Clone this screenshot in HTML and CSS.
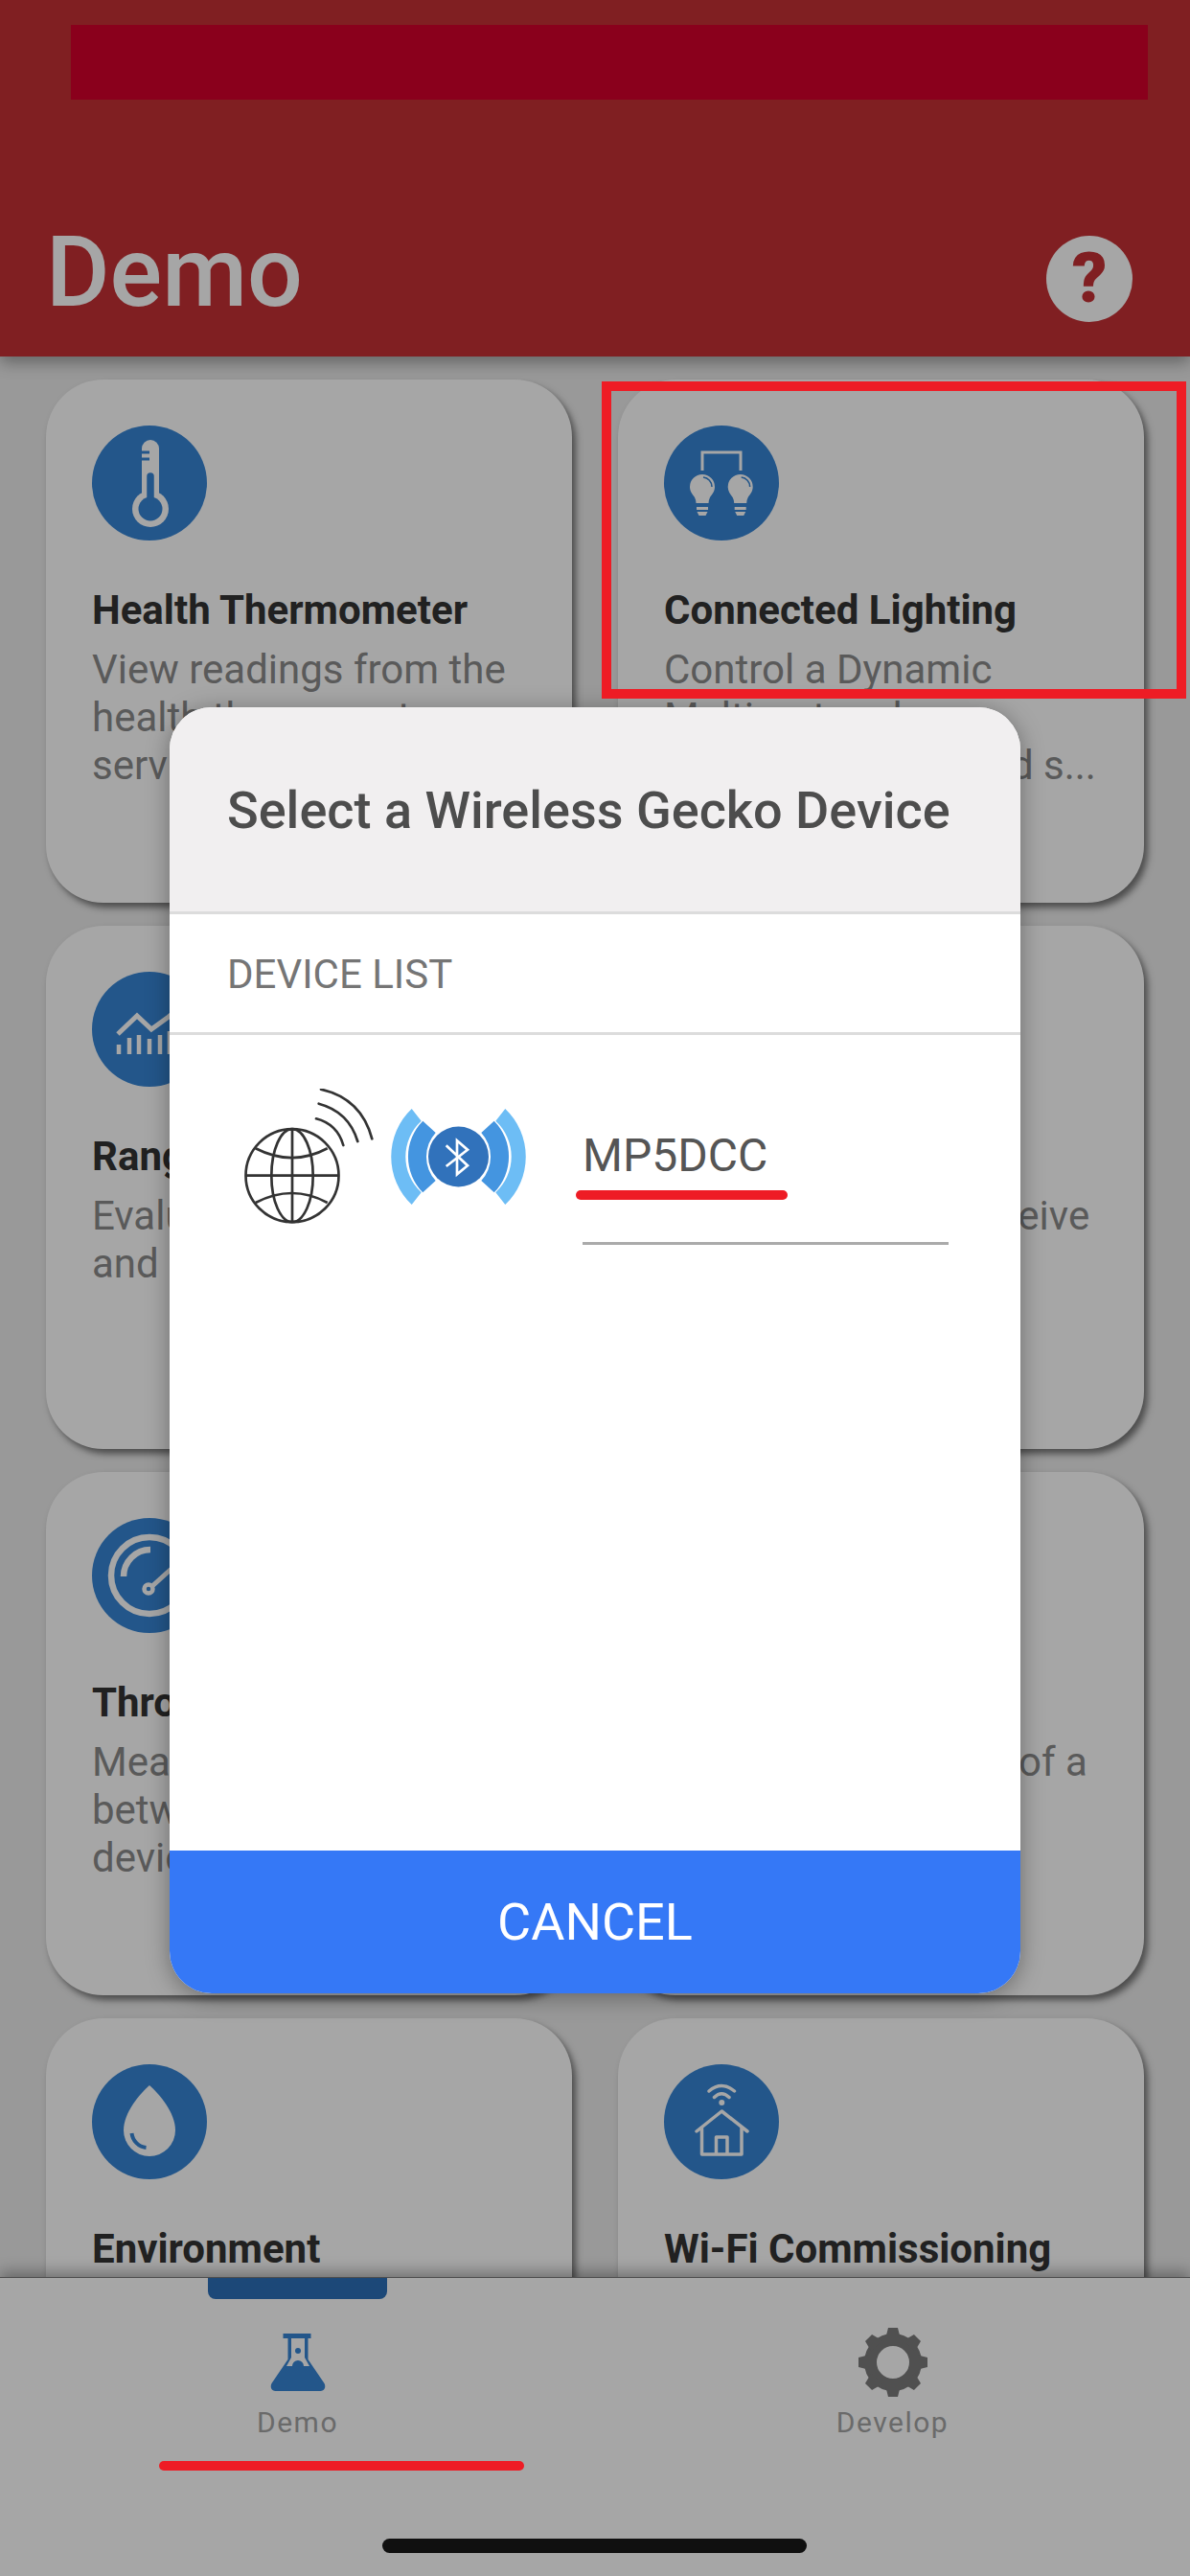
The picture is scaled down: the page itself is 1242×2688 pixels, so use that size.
FILE: index.html
```html
<!DOCTYPE html>
<html lang="en">
<head>
  <meta charset="UTF-8">
  <title>Demo</title>
  <link rel="stylesheet" href="styles.css">
</head>
<body>
  <div class="page">
    <header class="top">
      <h1>Demo</h1>
      <span class="help">?</span>
    </header>

    <main class="grid">
      <div class="card">
        <svg class="ico" viewBox="0 0 120 120">
          <circle class="disc" cx="60" cy="60" r="60"/>
          <rect class="w" x="52" y="15" width="18" height="70" rx="9"/>
          <circle class="w" cx="61" cy="87" r="19"/>
          <circle class="disc" cx="61" cy="87" r="12.5"/>
          <path class="b" stroke-width="7.5" stroke-linecap="round" d="M61 53V82"/>
          <path class="b" stroke-width="3" d="M51 28h9M51 35h9"/>
        </svg>
        <h3>Health Thermometer</h3>
        <p>View readings from the<br>health thermometer<br>service</p>
      </div>
      <div class="card">
        <svg class="ico" viewBox="0 0 120 120">
          <circle class="disc" cx="60" cy="60" r="60"/>
          <path class="wl" stroke-width="3" d="M40 47V28H80V47"/>
          <g id="bulb">
            <path class="w" d="M40 51a13 13 0 0 1 13 13c0 5-3 8-5 11-1 2-1.500 4-1.500 6h-13c0-2-.5-4-1.500-6-2-3-5-6-5-11a13 13 0 0 1 13-13z"/>
            <path class="b" stroke-width="1.600" d="M41 54a10 10 0 0 1 9 10"/>
            <path class="w" d="M34 85h12v3H34zM34.500 90h11l-2 4h-7z"/>
          </g>
          <use href="#bulb" x="39.700"/>
        </svg>
        <h3>Connected Lighting</h3>
        <p>Control a Dynamic<br>Multiprotocol<br>Bluetooth lamps and s...</p>
      </div>
      <div class="card">
        <svg class="ico" viewBox="0 0 120 120">
          <circle class="disc" cx="60" cy="60" r="60"/>
          <path class="wl" stroke-width="5" d="M27 65L47 46L62 60L80 47L96 34"/>
          <path class="wl" stroke-width="4.500" d="M28 86V76M39 86V69M49 86V66M60 86V70M71 86V66M81 86V62M92 86V55"/>
        </svg>
        <h3>Range Test</h3>
        <p>Evaluate link quality<br>and range</p>
      </div>
      <div class="card">
        <svg class="ico" viewBox="0 0 120 120">
          <circle class="disc" cx="60" cy="60" r="60"/>
        </svg>
        <h3>Blinky</h3>
        <p>Control LED and receive<br>button presses</p>
      </div>
      <div class="card">
        <svg class="ico" viewBox="0 0 120 120">
          <circle class="disc" cx="60" cy="60" r="60"/>
          <circle class="wl" stroke-width="6.500" cx="60" cy="60" r="40"/>
          <path class="wl" stroke-width="6.500" d="M33 61a28 28 0 0 1 28-28"/>
          <circle class="wl" stroke-width="4.500" cx="59" cy="74" r="4.500"/>
          <path class="wl" stroke-width="5" stroke-linecap="round" d="M63 71L84 52"/>
        </svg>
        <h3>Throughput</h3>
        <p>Measure throughput<br>between two<br>devices</p>
      </div>
      <div class="card">
        <svg class="ico" viewBox="0 0 120 120">
          <circle class="disc" cx="60" cy="60" r="60"/>
        </svg>
        <h3>Motion</h3>
        <p>Test the movement of a<br>device</p>
      </div>
      <div class="card">
        <svg class="ico" viewBox="0 0 120 120">
          <circle class="disc" cx="60" cy="60" r="60"/>
          <path class="w" d="M60 22C50 31 33 50 33 69A27 27 0 0 0 87 69C87 50 70 31 60 22z"/>
          <path class="b" stroke-width="4" d="M41.500 72A17 17 0 0 0 56.500 87"/>
        </svg>
        <h3>Environment</h3>
      </div>
      <div class="card">
        <svg class="ico" viewBox="0 0 120 120">
          <circle class="disc" cx="60" cy="60" r="60"/>
          <path class="wl" stroke-width="3.500" stroke-linecap="round" d="M47 28Q60 17 73.500 28M52.500 34.500Q60 27 68 34.500"/>
          <circle class="w" cx="60.300" cy="40" r="3"/>
          <path class="wl" stroke-width="3.500" stroke-linejoin="round" stroke-linecap="round" d="M34 70L60.300 49L87 70M39.500 66V94H81V66M54.500 94V76H66V94"/>
        </svg>
        <h3>Wi-Fi Commissioning</h3>
      </div>
    </main>

    <nav class="tabs">
      <span class="tab-mark"></span>
      <div class="tab">
        <svg class="tab-ico" viewBox="0 0 72 72">
          <path class="flask" d="M20.500 6h29v5h-3v22l17 25c2 4 0 8-4 8H12.500c-4 0-6-4-4-8l17-25V11h-5z"/>
          <path class="hole" d="M29 11h14v20l5 9h-6a6 6 0 0 0-12 0h-6l5-9z"/>
          <circle class="flask" cx="36" cy="24" r="3"/>
        </svg>
        <span class="tab-label">Demo</span>
      </div>
      <div class="tab">
        <svg class="tab-ico" viewBox="0 0 72 72">
          <g transform="translate(36 36)">
            <circle class="gear-ring" r="23.500"/>
            <path id="tooth" class="gear" d="M-5-36H5L8-24H-8z"/>
            <use href="#tooth" transform="rotate(45)"/>
            <use href="#tooth" transform="rotate(90)"/>
            <use href="#tooth" transform="rotate(135)"/>
            <use href="#tooth" transform="rotate(180)"/>
            <use href="#tooth" transform="rotate(225)"/>
            <use href="#tooth" transform="rotate(270)"/>
            <use href="#tooth" transform="rotate(315)"/>
          </g>
        </svg>
        <span class="tab-label">Develop</span>
      </div>
      <span class="home-bar"></span>
    </nav>
  </div>

  <div class="dim">
    <div class="modal">
      <div class="modal-head">Select a Wireless Gecko Device</div>
      <div class="modal-sub">DEVICE LIST</div>
      <div class="modal-body">
        <div class="device">
          <svg class="globe" viewBox="0 0 135 142">
            <g fill="none" stroke="#333" stroke-width="2.700">
              <circle cx="50" cy="90.700" r="48.500"/>
              <ellipse cx="50" cy="90.700" rx="21.700" ry="48.500"/>
              <path d="M50 42.200V139.200M1.500 90.700H98.500"/>
              <path d="M11.700 62.300Q50 82 86.700 62.300M11.700 119Q50 99 86.700 119"/>
              <path stroke-linecap="round" d="M75 31.300Q97 37 103.300 59M77.700 15.700Q109 24 118.300 55M80 .7Q122 10 133.300 52.300"/>
            </g>
          </svg>
          <svg class="bt" viewBox="0 0 141 100">
            <g id="wedges">
              <path fill="#6dbdf5" d="M119.300 0A69 69 0 0 1 119.300 100L109.300 87.300A50.600 50.600 0 0 0 109.300 12.700z"/>
              <path fill="#4495e0" d="M107.700 12.700A53 53 0 0 1 107.700 87.300L94.300 75A37 37 0 0 0 94.300 25z"/>
            </g>
            <use href="#wedges" transform="matrix(-1 0 0 1 141 0)"/>
            <circle fill="#3172bb" cx="70.500" cy="50" r="31.500"/>
            <path fill="none" stroke="#fff" stroke-width="2.700" d="M57.700 38.300L80 59.300L69 68.300V33.300L80 42.700L57.700 60"/>
          </svg>
          <div class="dev-name">MP5DCC</div>
        </div>
      </div>
      <div class="modal-cancel">CANCEL</div>
    </div>
  </div>

  <!-- annotations drawn over the dimmed screen -->
  <div class="mark mark-bar"></div>
  <div class="mark mark-frame"></div>
  <div class="mark mark-name"></div>
  <div class="mark mark-tab"></div>
</body>
</html>
```

FILE: styles.css
```css
* {
  box-sizing: border-box;
}

body {
  margin: 0;
  width: 1242px;
  height: 2688px;
  overflow: hidden;
  position: relative;
  font-family: Roboto, "Liberation Sans", sans-serif;
}

.page {
  height: 2688px;
  display: flex;
  flex-direction: column;
  background-color: #ebebeb;
}

/* header */
.top {
  height: 372px;
  flex: none;
  display: flex;
  justify-content: space-between;
  align-items: flex-end;
  padding: 0 60px 36px 48px;
  background-color: #c53135;
  box-shadow: 0 6px 16px rgba(0, 0, 0, 0.35);
  position: relative;
  z-index: 1;
}

.top h1 {
  margin: 0 0 -6px;
  font-size: 102px;
  line-height: 116px;
  font-weight: 500;
  color: #fff;
}

.help {
  width: 90px;
  height: 90px;
  border-radius: 50%;
  background-color: #fff;
  color: #c53135;
  font-size: 72px;
  font-weight: 900;
  line-height: 90px;
  text-align: center;
}

/* cards */
.grid {
  flex: 1;
  min-height: 0;
  overflow: hidden;
  display: grid;
  grid-template-columns: 549px 549px;
  grid-auto-rows: 546px;
  gap: 24px 48px;
  padding: 24px 48px 0;
}

.card {
  background-color: #fff;
  border-radius: 60px;
  padding: 48px;
  box-shadow: 4px 5px 7px rgba(0, 0, 0, 0.5);
}

.ico {
  display: block;
  width: 120px;
  height: 120px;
}

.disc {
  fill: #3685d5;
}

.w {
  fill: #fff;
}

.wl {
  fill: none;
  stroke: #fff;
}

.b {
  fill: none;
  stroke: #3685d5;
}

.card h3 {
  margin: 48px 0 0;
  font-size: 42px;
  line-height: 50px;
  font-weight: 700;
  color: #343434;
  white-space: nowrap;
}

.card p {
  margin: 12px 0 0;
  font-size: 42px;
  line-height: 50px;
  color: #8b8b8b;
  white-space: nowrap;
}

/* bottom tabs */
.tabs {
  height: 312px;
  flex: none;
  display: grid;
  grid-template-columns: 1fr 1fr;
  align-items: start;
  padding-top: 52px;
  background-color: #fff;
  border-top: 1px solid #777;
  box-shadow: 0 -6px 14px rgba(0, 0, 0, 0.3);
  position: relative;
  z-index: 1;
}

.tab {
  display: flex;
  flex-direction: column;
  align-items: center;
}

.tab-ico {
  width: 72px;
  height: 72px;
}

.tab-label {
  margin-top: 10px;
  font-size: 30px;
  line-height: 34px;
  letter-spacing: 1.500px;
  color: #a4a4a4;
}

.flask {
  fill: #3685d5;
}

.hole {
  fill: #fff;
}

.gear {
  fill: #7b7b7b;
}

.gear-ring {
  fill: none;
  stroke: #7b7b7b;
  stroke-width: 13px;
}

.tab-mark {
  position: absolute;
  left: 217px;
  top: 0;
  width: 187px;
  height: 22px;
  background-color: #2c6fb9;
  border-radius: 0 0 8px 8px;
}

.home-bar {
  position: absolute;
  left: 399px;
  bottom: 24px;
  width: 443px;
  height: 15px;
  border-radius: 8px;
  background-color: #1a1a1a;
}

/* dialog */
.dim {
  position: absolute;
  top: 0;
  left: 0;
  right: 0;
  bottom: 0;
  z-index: 2;
  background-color: rgba(0, 0, 0, 0.35);
  display: flex;
  justify-content: center;
  align-items: flex-start;
  padding-top: 738px;
}

.modal {
  width: 888px;
  height: 1342px;
  display: flex;
  flex-direction: column;
  background-color: #fff;
  border-radius: 44px;
  overflow: hidden;
  box-shadow: 0 4px 24px rgba(0, 0, 0, 0.35);
}

.modal-head {
  height: 216px;
  flex: none;
  padding: 1px 0 0 60px;
  display: flex;
  align-items: center;
  background-color: #f1eff0;
  border-bottom: 3px solid #dcdcdc;
  font-size: 54px;
  font-weight: 500;
  color: #4d4d4d;
}

.modal-sub {
  height: 126px;
  flex: none;
  padding: 1px 0 0 60px;
  display: flex;
  align-items: center;
  border-bottom: 3px solid #dcdcdc;
  font-size: 42px;
  color: #757575;
}

.modal-body {
  flex: 1;
  padding: 56px 0 0 78px;
}

.device {
  display: flex;
  align-items: flex-start;
}

.globe {
  width: 135px;
  height: 142px;
  flex: none;
}

.bt {
  width: 141px;
  height: 100px;
  flex: none;
  margin: 21px 0 0 18px;
}

.dev-name {
  width: 382px;
  height: 121px;
  margin: 42px 0 0 59px;
  font-size: 48px;
  line-height: 56px;
  color: #555;
  border-bottom: 3px solid #aaa;
}

.modal-cancel {
  height: 149px;
  flex: none;
  display: flex;
  align-items: center;
  justify-content: center;
  background-color: #3578f6;
  color: #fff;
  font-size: 54px;
}

/* annotations */
.mark {
  position: absolute;
  z-index: 3;
}

.mark-bar {
  left: 74px;
  top: 26px;
  width: 1124px;
  height: 78px;
  background-color: #8a001c;
}

.mark-frame {
  left: 628px;
  top: 398px;
  width: 610px;
  height: 331px;
  border: 10px solid #ee1c25;
}

.mark-name {
  left: 601px;
  top: 1242px;
  width: 221px;
  height: 10px;
  border-radius: 5px;
  background-color: #ee1c25;
}

.mark-tab {
  left: 166px;
  top: 2568px;
  width: 381px;
  height: 10px;
  border-radius: 5px;
  background-color: #ee1c25;
}
```
